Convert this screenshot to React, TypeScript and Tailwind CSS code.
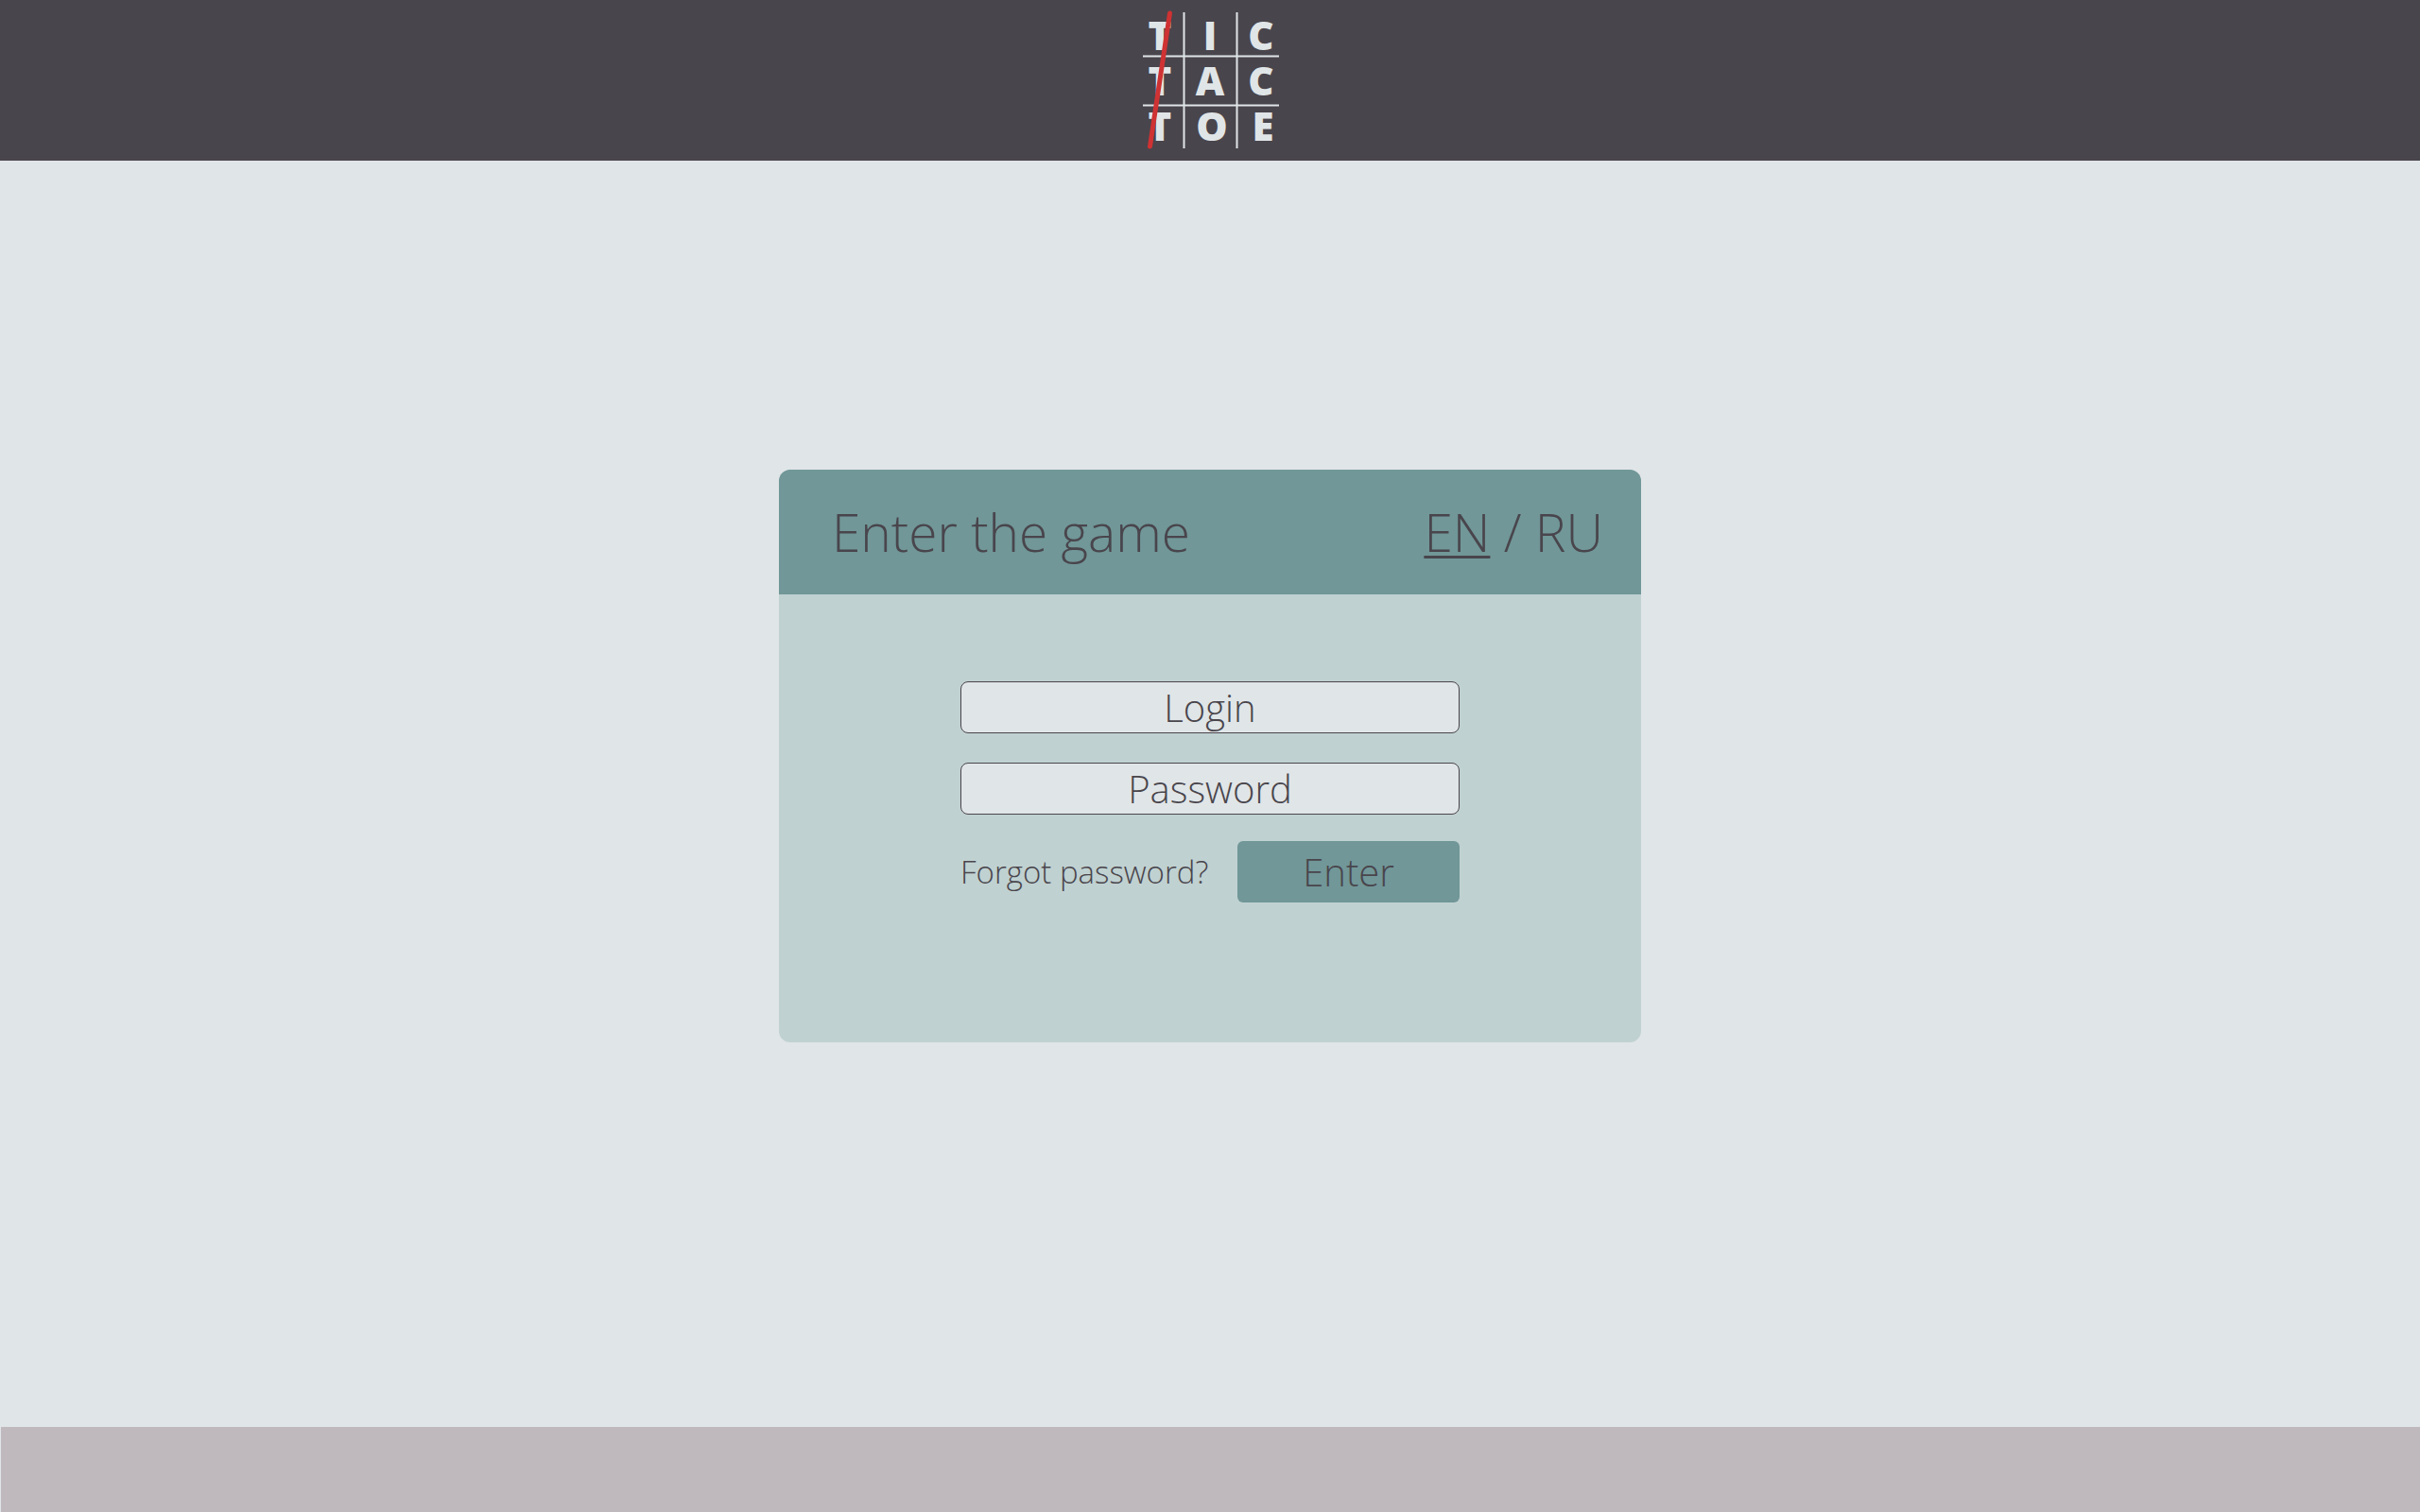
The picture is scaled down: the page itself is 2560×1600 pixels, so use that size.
const fieldClass =
  "block h-[55px] w-full rounded-lg border border-[#49454c] bg-[#e0e5e7] text-center text-[40px] text-[#49454c] placeholder:text-[#49454c] placeholder:opacity-100";

function Logo() {
  return (
    <svg viewBox="0 0 146 146" className="size-[146px] overflow-visible" role="img" aria-label="Tic Tac Toe">
      <path d="M45.5 1V145M101.5 1V145M2 47.5H146M2 99.5H146" stroke="#e0e5e7" strokeWidth="2" />
      <g fill="#e0e5e7" fontWeight="800" fontSize="42" textAnchor="middle">
        <text x="20" y="41">T</text>
        <text x="73" y="41">I</text>
        <text x="127" y="41">C</text>
        <text x="20" y="89">T</text>
        <text x="73" y="89">A</text>
        <text x="127" y="89">C</text>
        <text x="20" y="137">T</text>
        <text x="75" y="137">O</text>
        <text x="129" y="137">E</text>
      </g>
      <path d="M30.5 2L9.5 143" stroke="#cf3233" strokeWidth="5" strokeLinecap="round" />
    </svg>
  );
}

export default function App() {
  return (
    <div className="flex min-h-screen flex-col bg-[#e0e5e7] font-['Open_Sans',sans-serif] font-light text-[#49454c]">
      <header className="flex items-center justify-center bg-[#49454c] py-3">
        <Logo />
      </header>
      <main className="flex flex-1 items-center justify-center pb-20">
        <section className="w-full max-w-[912px] overflow-hidden rounded-xl bg-[#c0d1d1]">
          <div className="flex h-33 items-center justify-between bg-[#719798] pr-10 pl-14 text-[55px]">
            <h1>Enter the game</h1>
            <nav aria-label="Language">
              <a href="#en" className="underline decoration-3 underline-offset-4">EN</a>
              {" / "}
              <a href="#ru">RU</a>
            </nav>
          </div>
          <form className="px-48 pt-23 pb-37">
            <input type="text" aria-label="Login" placeholder="Login" className={fieldClass} />
            <input type="password" aria-label="Password" placeholder="Password" className={`mt-[31px] ${fieldClass}`} />
            <div className="mt-7 flex items-center justify-between">
              <a href="#forgot" className="text-[33px]">Forgot password?</a>
              <button type="submit" className="h-[65px] w-[235px] rounded-md bg-[#719798] text-[40px] leading-none">Enter</button>
            </div>
          </form>
        </section>
      </main>
      <footer className="ml-px h-[90px] bg-[#bfb9be]" />
    </div>
  );
}
